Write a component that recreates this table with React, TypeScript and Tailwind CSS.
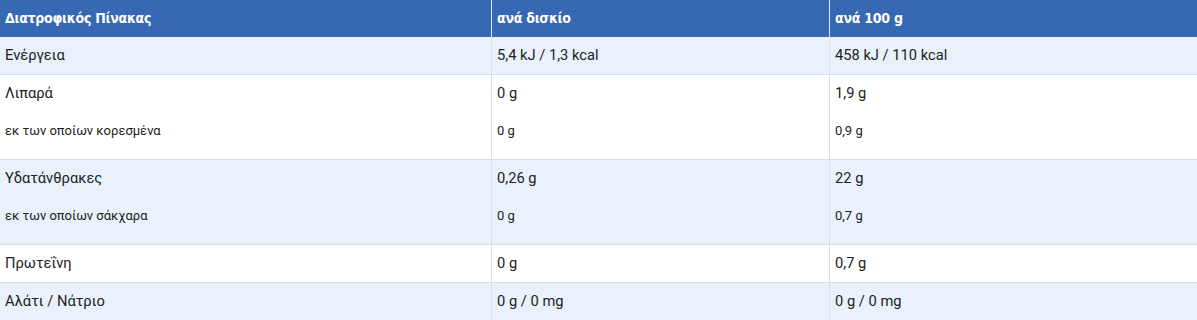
const rows: { items: { label: string; a: string; b: string; sub?: boolean }[]; shade: boolean }[] = [
  { shade: true, items: [{ label: "Ενέργεια", a: "5,4 kJ / 1,3 kcal", b: "458 kJ / 110 kcal" }] },
  {
    shade: false,
    items: [
      { label: "Λιπαρά", a: "0 g", b: "1,9 g" },
      { label: "εκ των οποίων κορεσμένα", a: "0 g", b: "0,9 g", sub: true },
    ],
  },
  {
    shade: true,
    items: [
      { label: "Υδατάνθρακες", a: "0,26 g", b: "22 g" },
      { label: "εκ των οποίων σάκχαρα", a: "0 g", b: "0,7 g", sub: true },
    ],
  },
  { shade: false, items: [{ label: "Πρωτεΐνη", a: "0 g", b: "0,7 g" }] },
  { shade: true, items: [{ label: "Αλάτι / Νάτριο", a: "0 g / 0 mg", b: "0 g / 0 mg" }] },
];

function Cell({ lines, first, last }: { lines: { text: string; sub?: boolean }[]; first?: boolean; last?: boolean }) {
  const multi = lines.length > 1;
  return (
    <div
      className={
        (first ? "w-[492px] " : last ? "flex-1 " : "w-[338px] ") +
        (last ? "" : "border-r border-[#dedede] ") +
        "pl-[5px] " +
        (multi ? "pb-[10px]" : "")
      }
    >
      {lines.map((l, i) => (
        <div
          key={i}
          className={"h-[37px] flex items-center " + (l.sub ? "text-[13px]" : "text-[14.7px]")}
        >
          {l.text}
        </div>
      ))}
    </div>
  );
}

export default function App() {
  return (
    <div
      className="w-[1197px] h-[320px] overflow-hidden bg-white text-[#222222]"
      style={{ fontFamily: "Roboto, 'Noto Sans', sans-serif" }}
    >
      <div
        className="flex h-[37px] bg-[#3768b3] text-white font-bold text-[14px] tracking-[-0.25px]"
        style={{ fontFamily: "'DejaVu Sans Condensed', 'DejaVu Sans', sans-serif" }}
      >
        <div className="w-[492px] border-r border-[#e4ebf5] pl-[5px] flex items-center">Διατροφικός Πίνακας</div>
        <div className="w-[338px] border-r border-[#e4ebf5] pl-[5px] flex items-center">ανά δισκίο</div>
        <div className="flex-1 pl-[5px] flex items-center">ανά 100 g</div>
      </div>
      {rows.map((r, i) => (
        <div
          key={i}
          className={"flex border-b border-[#dedede] " + (r.shade ? "bg-[#e9f1fb]" : "bg-white")}
        >
          <Cell first lines={r.items.map((x) => ({ text: x.label, sub: x.sub }))} />
          <Cell lines={r.items.map((x) => ({ text: x.a, sub: x.sub }))} />
          <Cell last lines={r.items.map((x) => ({ text: x.b, sub: x.sub }))} />
        </div>
      ))}
    </div>
  );
}
